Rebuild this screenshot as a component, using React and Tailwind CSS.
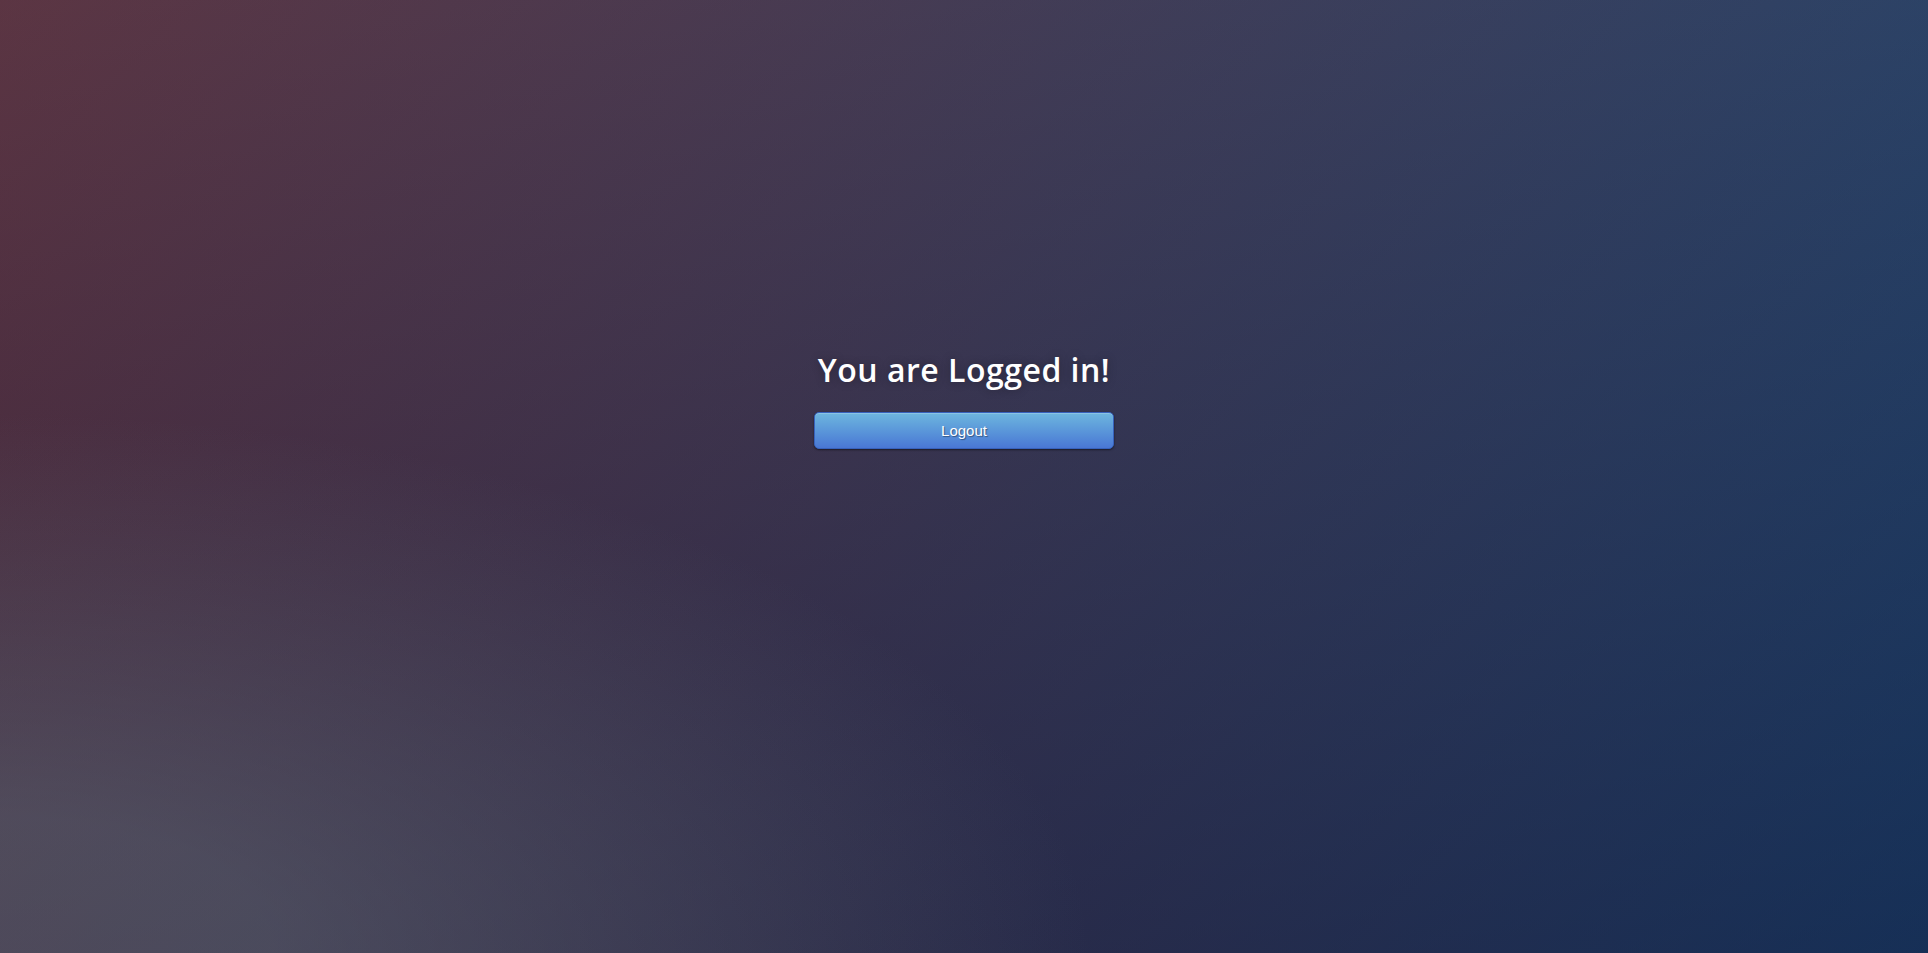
import React from "react";

export default function App() {
  return (
    <div className="relative h-screen w-full overflow-hidden [background:radial-gradient(ellipse_at_0%_100%,rgba(104,128,138,0.4)_10%,rgba(138,114,76,0)_40%),linear-gradient(to_bottom,rgba(57,173,219,0.25)_0%,rgba(42,60,87,0.4)_100%),linear-gradient(135deg,#670d10_0%,#092756_100%)] font-['Open_Sans',sans-serif]">
      <div className="flex h-full items-center justify-center">
        {/* login box */}
        <div className="h-[300px] w-[300px]">
          <h1 className="my-[0.67em] text-center text-[32px] leading-[normal] font-semibold tracking-[0.5px] whitespace-nowrap text-white [text-shadow:0_0_10px_rgba(0,0,0,0.3)]">
            You are Logged in!
          </h1>
          <button
            type="button"
            className="block w-full cursor-pointer rounded-[5px] border border-[#3762bc] bg-[#4a77d4] bg-linear-to-b from-[#6eb6de] to-[#4a77d4] px-[14px] py-[9px] text-center font-['Liberation_Sans',Arial,sans-serif] text-[15px] leading-[normal] text-white shadow-[inset_0_1px_0_rgba(255,255,255,0.2),0_1px_2px_rgba(0,0,0,0.5)] [text-shadow:1px_1px_1px_rgba(0,0,0,0.4)]"
          >
            Logout
          </button>
        </div>
      </div>
    </div>
  );
}
